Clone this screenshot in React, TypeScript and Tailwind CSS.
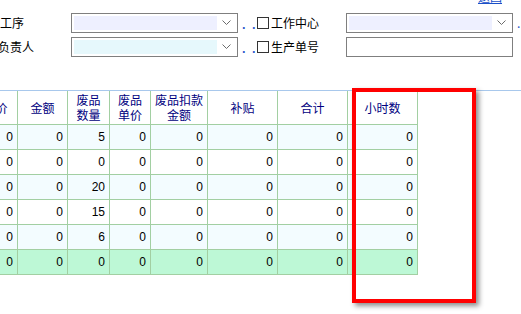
import React from "react";

const cols = [
  { w: 44, label: ["单价"] },
  { w: 50, label: ["金额"] },
  { w: 42, label: ["废品", "数量"] },
  { w: 41, label: ["废品", "单价"] },
  { w: 57, label: ["废品扣款", "金额"] },
  { w: 70, label: ["补贴"] },
  { w: 70, label: ["合计"] },
  { w: 70, label: ["小时数"] },
];

// 废品数量 per row, everything else is 0
const rows = [5, 0, 20, 15, 6];

function Chevron() {
  return (
    <svg width="9" height="6" viewBox="0 0 9 6" className="block">
      <polyline points="0.5,0.5 4.5,4.5 8.5,0.5" fill="none" stroke="#6b6b6b" strokeWidth="1" />
    </svg>
  );
}

function Select({ fill }: { fill: string }) {
  return (
    <div className="flex h-[20px] w-[167px] items-stretch border border-[#7f7f7f] bg-white p-[2px]">
      <div className={`flex-1 ${fill}`} />
      <div className="flex w-[18px] items-center justify-center">
        <Chevron />
      </div>
    </div>
  );
}

function Dots() {
  return (
    <div className="flex h-[20px] w-[19px] items-end pb-[4px] pl-[4px] text-[11px] leading-[10px] font-bold text-[#1a50c8]">
      <span className="tracking-[2px]">. .</span>
    </div>
  );
}

function Check() {
  return <div className="h-[12px] w-[12px] border border-[#333] bg-white" />;
}

export default function App() {
  return (
    <div
      className="relative h-[314px] w-[521px] overflow-hidden bg-white text-black"
      style={{ fontFamily: '"Noto Sans CJK SC", "Liberation Sans", sans-serif' }}
    >
      {/* cut-off link at the very top */}
      <div className="flex h-[5px] justify-end overflow-hidden pr-[19px]">
        <span className="-mt-[10px] text-[12px] leading-[14px] text-[#1a50c8] underline">返回</span>
      </div>

      {/* ===== filter form ===== */}
      <div className="flex flex-col gap-[4px] pt-[8px] text-[12px]">
        <div className="flex items-center whitespace-nowrap">
          <div className="w-[71px]">
            <span>工序</span>
          </div>
          <Select fill="bg-[#eef0ff]" />
          <Dots />
          <Check />
          <span className="ml-[2px] w-[75px]">工作中心</span>
          <Select fill="bg-[#eef0ff]" />
          <span className="ml-[4px] text-[#1a50c8]">.</span>
        </div>
        <div className="flex items-center whitespace-nowrap">
          <div className="w-[71px] overflow-hidden">
            <span className="-ml-[2px] block">负责人</span>
          </div>
          <Select fill="bg-[#e6f8fc]" />
          <Dots />
          <Check />
          <span className="ml-[2px] w-[75px]">生产单号</span>
          <div className="h-[20px] w-[167px] border border-[#7f7f7f] bg-white" />
        </div>
      </div>

      {/* ===== grid ===== */}
      <div className="mt-[33px] h-px w-full bg-[#a8c8ec]" />
      <div className="overflow-hidden">
        <table className="-ml-[27px] table-fixed border-collapse" style={{ width: 444 }}>
          <colgroup>
            {cols.map((c, i) => (
              <col key={i} style={{ width: c.w }} />
            ))}
          </colgroup>
          <thead>
            <tr className="h-[33px]">
              {cols.map((c, i) => (
                <th
                  key={i}
                  className="border-x border-b border-[#a2cfa2] p-0 text-center align-middle text-[12px] leading-[15px] font-normal text-[#000080]"
                >
                  {c.label.map((l) => (
                    <div key={l}>{l}</div>
                  ))}
                </th>
              ))}
            </tr>
          </thead>
          <tbody style={{ fontFamily: '"Liberation Sans", sans-serif' }}>
            {rows.map((n, r) => (
              <tr key={r} className={`h-[25px] ${r % 2 === 0 ? "bg-[#f3fcff]" : "bg-white"}`}>
                {cols.map((_, i) => (
                  <td key={i} className="border border-[#a2cfa2] p-0 pr-[4px] text-right text-[12px]">
                    {i === 2 ? n : 0}
                  </td>
                ))}
              </tr>
            ))}
            <tr className="h-[25px] bg-[#bdf8d6]">
              {cols.map((_, i) => (
                <td key={i} className="border border-[#a2cfa2] p-0 pr-[4px] text-right text-[12px]">
                  0
                </td>
              ))}
            </tr>
          </tbody>
        </table>
      </div>

      {/* red highlight box drawn over the grid */}
      <div className="absolute left-[352px] top-[88px] h-[215px] w-[124px] border-[4px] border-[#ff0000] shadow-[3px_3px_5px_rgba(0,0,0,0.45)]" />
    </div>
  );
}
